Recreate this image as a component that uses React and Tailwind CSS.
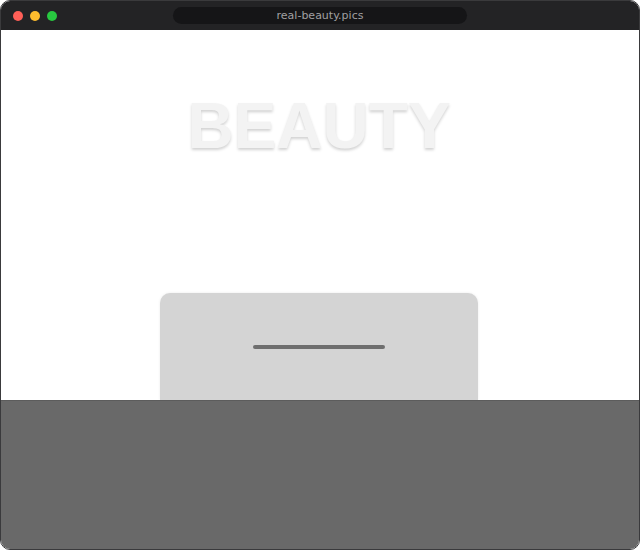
import React from 'react';

const App = () => {
  return (
    <div className="w-[640px] h-[550px] bg-white">
      <div className="h-full flex flex-col rounded-[10px] overflow-hidden border border-[#3a3a3c]">
        {/* Title bar */}
        <div className="h-[29px] shrink-0 bg-[#232325] flex items-center relative">
          <div className="flex items-center gap-[7px] pl-[12px]">
            <span className="w-[10px] h-[10px] rounded-full bg-[#ff5f57]" />
            <span className="w-[10px] h-[10px] rounded-full bg-[#febc2e]" />
            <span className="w-[10px] h-[10px] rounded-full bg-[#28c840]" />
          </div>
          <div className="absolute left-[172px] top-[6px] w-[294px] h-[17px] rounded-full bg-[#151517] flex items-center justify-center">
            <span className="text-[11px] leading-none text-[#a0a0a2] font-['DejaVu_Sans',sans-serif]">real-beauty.pics</span>
          </div>
        </div>

        {/* Page */}
        <div className="flex-1 flex flex-col">
          <div className="flex-1 flex flex-col items-center pt-[64px]">
            <h1 className="mr-[2px] text-[64px] leading-none font-bold text-[#f3f3f3] font-['Liberation_Sans',Arial,sans-serif] [text-shadow:0_2px_3px_rgba(0,0,0,0.18)]">
              BEAUTY
            </h1>
            <div className="mt-auto mr-[2px] w-[318px] h-[107px] rounded-t-[10px] bg-[#d4d4d4] shadow-[0_0_3px_rgba(0,0,0,0.08)] flex justify-center pt-[52px]">
              <div className="w-[132px] h-[4px] rounded-full bg-[#6e6e6e]" />
            </div>
          </div>
          <div className="h-[149px] shrink-0 bg-[#696969] border-t border-[#5c5c5c]" />
        </div>
      </div>
    </div>
  );
};

export default App;
